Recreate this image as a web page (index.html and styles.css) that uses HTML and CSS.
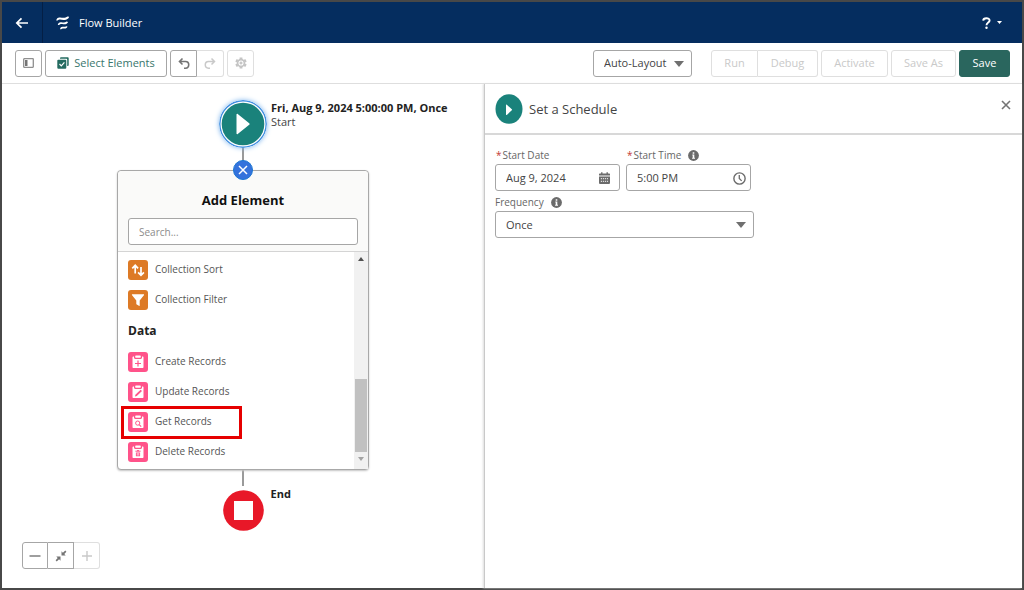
FILE: index.html
```html
<!DOCTYPE html>
<html lang="en">
<head>
<meta charset="utf-8">
<meta name="viewport" content="width=device-width, initial-scale=1">
<title>Flow Builder</title>
<link rel="stylesheet" href="styles.css">
</head>
<body>
<div class="app">
  <header class="topbar">
    <button class="back" type="button" aria-label="Back">
      <svg width="14" height="12" viewBox="0 0 14 12" fill="none" stroke="#fff" stroke-width="1.700"><path d="M13 6H2M6.500 1.300L1.800 6l4.700 4.700"/></svg>
    </button>
    <svg class="logo" width="16" height="16" viewBox="0 0 16 16" fill="#fff"><path d="M1.200 5.600C1.600 3 3 2.300 5 2.500c3 .4 5.500.7 7.500-.9l1.700.2c-.9 2.400-2.900 3.400-5.700 3.100-2.800-.3-4.500-.9-5.900.7z"/><path d="M2.800 10C3.200 7.700 4.400 7 6.300 7.200c2.200.3 3.700.5 5.200-.6l1.600.3c-.8 2-2.400 2.700-4.700 2.400-2-.2-3.200-.7-4.300.7z"/><path d="M5 14.200c.3-2 1.400-2.700 3-2.500 1.200.1 2.200.2 3.200-.5l1.300.3c-.6 1.700-1.700 2.200-3.300 2-1.300-.1-2.100-.4-3 .7z"/></svg>
    <h1 class="app-name">Flow Builder</h1>
    <button class="help" type="button" aria-label="Help">
      <svg width="9" height="12" viewBox="0 0 9 12"><path d="M1.200 3.600C1.300 .6 7.600 .4 7.600 3.500 7.600 5.700 4.500 5.500 4.500 8.300" fill="none" stroke="#fff" stroke-width="1.900"/><circle cx="4.500" cy="10.800" r="1.200" fill="#fff"/></svg>
      <svg width="5" height="3" viewBox="0 0 5 3"><path d="M0 0h5L2.500 3z" fill="#fff"/></svg>
    </button>
  </header>

  <div class="toolbar">
    <button class="btn icon" type="button" aria-label="Toggle toolbox">
      <svg width="11" height="10" viewBox="0 0 11 10"><rect x=".7" y=".7" width="9.600" height="8.600" rx=".5" fill="#fff" stroke="#8f8f8f" stroke-width="1.300"/><path d="M2 2h2.500v6H2z" fill="#747474"/></svg>
    </button>
    <button class="btn select-elements" type="button">
      <svg width="12" height="12" viewBox="0 0 12 12"><path d="M3 1.800V1.200C3 .6 3.400.3 4 .3h6.800c.6 0 .9.300.9.900V8c0 .6-.3 1-.9 1h-.6V2.800c0-.6-.4-1-1-1z" fill="#246b60"/><rect x=".3" y="2.700" width="9" height="9" rx="1" fill="#246b60"/><path d="M2.500 7l1.800 1.900L7.400 5.300" fill="none" stroke="#fff" stroke-width="1.200"/></svg>
      <span>Select Elements</span>
    </button>
    <div class="group">
      <button class="btn icon" type="button" aria-label="Undo">
        <svg width="12" height="12" viewBox="0 0 12 12" fill="none" stroke="#747474" stroke-width="1.600"><path d="M4.500 1.500L1.500 4.500l3 3M1.500 4.500H7.500c4.300 0 4.300 6.700 0 6.700H6"/></svg>
      </button>
      <button class="btn icon" type="button" aria-label="Redo" disabled>
        <svg width="12" height="12" viewBox="0 0 12 12" fill="none" stroke="#c9c9c9" stroke-width="1.500"><path d="M7.500 1.500l3 3-3 3M10.500 4.500H4.500c-4.300 0-4.300 6.700 0 6.700H6"/></svg>
      </button>
    </div>
    <button class="btn icon" type="button" aria-label="Settings" disabled>
      <svg width="12" height="12" viewBox="0 0 12 12" fill="none" stroke="#c4c4c4"><circle cx="6" cy="6" r="3.400" stroke-width="1.700"/><path d="M6 .4v2M6 9.600v2M1 3.200l1.700 1M9.300 7.800l1.700 1M1 8.800l1.700-1M9.300 4.200l1.700-1" stroke-width="2.800"/><circle cx="6" cy="6" r="1.100" fill="#c4c4c4"/></svg>
    </button>
    <div class="actions">
      <div class="picker layout-picker">
        <select class="field" aria-label="Layout mode"><option>Auto-Layout</option></select>
      </div>
      <div class="group">
        <button class="btn run" type="button" disabled>Run</button>
        <button class="btn debug" type="button" disabled>Debug</button>
      </div>
      <button class="btn activate" type="button" disabled>Activate</button>
      <button class="btn save-as" type="button" disabled>Save As</button>
      <button class="btn save" type="button">Save</button>
    </div>
  </div>

  <main class="workspace">
    <section class="canvas" aria-label="Flow canvas">
      <div class="node start">
        <svg width="48" height="48" viewBox="0 0 48 48"><circle cx="24" cy="24" r="23.200" fill="#fff" stroke="#3f8ee0" stroke-width="1.400"/><circle cx="24" cy="24" r="21.300" fill="#1a827b"/><path d="M17.500 14.500c0-.8.600-1.100 1.200-.6l11.500 9.300c.6.500.6 1.100 0 1.600l-11.500 9.300c-.6.500-1.200.2-1.200-.6z" fill="#fff"/></svg>
        <div class="node-label"><strong>Fri, Aug 9, 2024 5:00:00 PM, Once</strong><span>Start</span></div>
      </div>
      <div class="connector from-start"></div>
      <div class="card">
        <button class="close-menu" type="button" aria-label="Close menu"><svg width="10" height="10" viewBox="0 0 10 10" stroke="#fff" stroke-width="1.500"><path d="M1 1l8 8M9 1L1 9"/></svg></button>
        <div class="card-head">
          <h2>Add Element</h2>
          <input class="field search" type="text" placeholder="Search..." aria-label="Search elements">
        </div>
        <div class="card-body">
          <div class="list">
            <button class="row" type="button">
              <svg class="tile orange" width="20" height="20" viewBox="0 0 20 20" fill="none" stroke="#fff" stroke-width="1.700"><path d="M7.200 13.500V5.500M4.300 8.300l2.900-3 2.900 3M13 7v8M10.100 12.300l2.900 3 2.900-3"/></svg>
              <span>Collection Sort</span></button>
            <button class="row" type="button">
              <svg class="tile orange" width="20" height="20" viewBox="0 0 20 20" fill="#fff"><path d="M4.500 4.300h11c.6 0 .8.500.4 1L11.700 10.500v5c0 .5-.4.600-.8.300L8.800 14.600c-.3-.2-.5-.4-.5-.8v-3.300L4.100 5.300c-.4-.5-.2-1 .4-1z"/></svg>
              <span>Collection Filter</span></button>
            <h3>Data</h3>
            <button class="row" type="button">
              <svg class="tile pink" width="20" height="20" viewBox="0 0 20 20"><path d="M6 4.600h-.5c-.6 0-1 .4-1 1V15c0 .6.400 1 1 1h9c.6 0 1-.4 1-1V5.600c0-.6-.4-1-1-1H14v.9c0 .9-.6 1.500-1.500 1.500h-5C6.600 7 6 6.400 6 5.500z" fill="#fff"/><rect x="7.200" y="3.600" width="5.600" height="2.200" rx=".7" fill="#fff"/><path d="M10 8.500v6M7 11.500h6" stroke="#ff538a" stroke-width="1.200"/></svg>
              <span>Create Records</span></button>
            <button class="row" type="button">
              <svg class="tile pink" width="20" height="20" viewBox="0 0 20 20"><path d="M6 4.600h-.5c-.6 0-1 .4-1 1V15c0 .6.400 1 1 1h9c.6 0 1-.4 1-1V5.600c0-.6-.4-1-1-1H14v.9c0 .9-.6 1.500-1.500 1.500h-5C6.600 7 6 6.400 6 5.500z" fill="#fff"/><rect x="7.200" y="3.600" width="5.600" height="2.200" rx=".7" fill="#fff"/><path d="M7 14.600l.4-1.900 5.200-5 1.400 1.400-5.200 5z" fill="#ff538a"/></svg>
              <span>Update Records</span></button>
            <button class="row marked" type="button">
              <svg class="tile pink" width="20" height="20" viewBox="0 0 20 20"><path d="M6 4.600h-.5c-.6 0-1 .4-1 1V15c0 .6.400 1 1 1h9c.6 0 1-.4 1-1V5.600c0-.6-.4-1-1-1H14v.9c0 .9-.6 1.500-1.500 1.500h-5C6.600 7 6 6.400 6 5.500z" fill="#fff"/><rect x="7.200" y="3.600" width="5.600" height="2.200" rx=".7" fill="#fff"/><circle cx="9.700" cy="11.100" r="2.100" fill="none" stroke="#ff538a"/><path d="M11.200 12.600l2 2" stroke="#ff538a" stroke-width="1.200"/></svg>
              <span>Get Records</span></button>
            <button class="row" type="button">
              <svg class="tile pink" width="20" height="20" viewBox="0 0 20 20"><path d="M6 4.600h-.5c-.6 0-1 .4-1 1V15c0 .6.400 1 1 1h9c.6 0 1-.4 1-1V5.600c0-.6-.4-1-1-1H14v.9c0 .9-.6 1.500-1.500 1.500h-5C6.600 7 6 6.400 6 5.500z" fill="#fff"/><rect x="7.200" y="3.600" width="5.600" height="2.200" rx=".7" fill="#fff"/><path d="M7.400 9.200h5.200M9 8.600h2" stroke="#ff538a"/><path d="M7.900 10.400h4.200v3.800H7.900z" fill="#ff538a"/><path d="M9.300 11v2.600M10.700 11v2.600" stroke="#fff" stroke-width=".6"/></svg>
              <span>Delete Records</span></button>
          </div>
          <div class="scrollbar" aria-hidden="true">
            <svg width="6" height="4" viewBox="0 0 6 4"><path d="M0 4h6L3 0z" fill="#505050"/></svg>
            <div class="track"><div class="thumb"></div></div>
            <svg width="6" height="4" viewBox="0 0 6 4"><path d="M0 0h6L3 4z" fill="#a3a3a3"/></svg>
          </div>
        </div>
      </div>
      <div class="connector from-card"></div>
      <div class="node end">
        <svg width="41" height="41" viewBox="0 0 41 41"><circle cx="20.500" cy="20.500" r="20.300" fill="#e81828"/><path d="M11 11h19v19H11z" fill="#fff"/></svg>
        <div class="node-label"><strong>End</strong></div>
      </div>
      <div class="zoom group">
        <button class="btn icon" type="button" aria-label="Zoom out"><svg width="12" height="12" viewBox="0 0 12 12" stroke="#747474" stroke-width="1.400"><path d="M.5 6h11"/></svg></button>
        <button class="btn icon" type="button" aria-label="Zoom to fit"><svg width="12" height="12" viewBox="0 0 12 12" fill="#747474"><path d="M6.500 5.500V1.300l1.400 1.400L10.300.6l1.100 1.100-2.100 2.400 1.400 1.400zM5.500 6.500v4.200L4.100 9.300l-2.400 2.100L.6 10.300l2.100-2.400-1.400-1.400z"/></svg></button>
        <button class="btn icon" type="button" aria-label="Zoom in" disabled><svg width="12" height="12" viewBox="0 0 12 12" stroke="#c9c9c9" stroke-width="1.400"><path d="M1 6h10M6 1v10"/></svg></button>
      </div>
    </section>

    <aside class="panel">
      <div class="panel-head">
        <svg width="28" height="30" viewBox="0 0 28 30"><ellipse cx="14" cy="15" rx="13.500" ry="14.800" fill="#1a827b"/><path d="M11 11c0-.5.400-.7.800-.3l5 4.600c.4.400.4.600 0 1l-5 4.600c-.4.400-.8.200-.8-.3z" fill="#fff"/></svg>
        <h2>Set a Schedule</h2>
        <button class="close-panel" type="button" aria-label="Close panel"><svg width="10" height="10" viewBox="0 0 10 10" stroke="#747474" stroke-width="1.600"><path d="M1 1l8 8M9 1L1 9"/></svg></button>
      </div>
      <form class="form">
        <div class="pair">
          <div class="control">
            <label class="required" for="date">Start Date</label>
            <div class="with-icon date">
              <input class="field" id="date" type="text" value="Aug 9, 2024">
              <svg width="11" height="12" viewBox="0 0 12 12" preserveAspectRatio="none"><path d="M0 3.500V2.300c0-.5.300-.8.800-.8h1.500V.2h1.500v1.300h4.400V.2h1.500v1.300h1.500c.5 0 .8.300.8.800v1.200zM0 4.500h12v6.600c0 .5-.3.800-.8.800H.8c-.5 0-.8-.3-.8-.8z" fill="#6b6b6b"/><path d="M2 6.700h8M2 9.300h8" stroke="#ddd" stroke-width="1.200" stroke-dasharray="1.300 .9"/></svg>
            </div>
          </div>
          <div class="control">
            <div class="label-line"><label class="required" for="time">Start Time</label>
              <svg width="11" height="11" viewBox="0 0 11 11"><circle cx="5.500" cy="5.500" r="5.400" fill="#6b6b6b"/><path d="M4.700 2.200h1.600v1.500H4.700zM4.300 4.600h2v3.200h.7v.9H4.100v-.9h.6V5.500h-.4z" fill="#fff"/></svg></div>
            <div class="with-icon">
              <input class="field" id="time" type="text" value="5:00 PM">
              <svg width="13" height="13" viewBox="0 0 12 12" fill="none" stroke="#6b6b6b" stroke-width="1.300"><circle cx="6" cy="6" r="5.200"/><path d="M5.800 2.800V6l2.200 2.200" stroke-width="1.200"/></svg>
            </div>
          </div>
        </div>
        <div class="control frequency">
          <div class="label-line"><label for="freq">Frequency</label>
            <svg width="11" height="11" viewBox="0 0 11 11"><circle cx="5.500" cy="5.500" r="5.400" fill="#6b6b6b"/><path d="M4.700 2.200h1.600v1.500H4.700zM4.300 4.600h2v3.200h.7v.9H4.100v-.9h.6V5.500h-.4z" fill="#fff"/></svg></div>
          <div class="picker"><select class="field" id="freq"><option>Once</option></select></div>
        </div>
      </form>
    </aside>
  </main>
</div>
</body>
</html>
```
FILE: styles.css
```css
*, *::before, *::after { box-sizing: border-box; }

body {
  margin: 0;
  color: #444;
  font: 11px/14px "Open Sans", "Noto Sans", sans-serif;
}

h1, h2, h3 { margin: 0; }
button, input, select { font: inherit; color: inherit; }
button { padding: 0; border: 0; background: none; }
svg { display: block; flex: none; }

.app {
  display: flex;
  flex-direction: column;
  min-height: 100vh;
  border: 2px solid #484848;
  background: #fff;
}

/* Top bar */
.topbar {
  display: flex;
  align-items: center;
  height: 41px;
  background: #052d5f;
  color: #fff;
}
.back {
  display: flex;
  align-items: center;
  justify-content: center;
  align-self: stretch;
  width: 41px;
  border-right: 1px solid #041f45;
}
.logo { margin-left: 12px; }
.app-name { margin-left: 8px; font-size: 11px; font-weight: 400; }
.help {
  display: flex;
  align-items: center;
  gap: 6px;
  margin-left: auto;
  padding-right: 20px;
}

/* Toolbar */
.toolbar {
  display: flex;
  align-items: center;
  gap: 3px;
  height: 41px;
  padding: 0 12px 0 13px;
  border-bottom: 1px solid #dedede;
}
.btn {
  display: flex;
  align-items: center;
  justify-content: center;
  height: 27px;
  border: 1px solid #a6a6a6;
  border-radius: 3px;
  background: #fff;
}
.btn:disabled { border-color: #dfdfdf; color: #c9c9c9; }
.icon { width: 27px; }
.select-elements { width: 122px; gap: 5px; color: #39766c; }
.group { display: flex; }
.group .btn:first-child { border-radius: 3px 0 0 3px; }
.group .btn + .btn { border-left-width: 0; border-radius: 0; }
.group .btn:last-child { border-radius: 0 3px 3px 0; }
.actions { display: flex; gap: 3px; margin-left: auto; }
.run { width: 47px; }
.debug { width: 60px; }
.activate { width: 67px; }
.save-as { width: 65px; }
.btn.save { width: 51px; border-color: #2a665e; background: #2a665e; color: #fff; }

/* Fields */
.field {
  display: block;
  width: 100%;
  height: 27px;
  padding: 0 10px;
  border: 1px solid #a6a6a6;
  border-radius: 3px;
  background: #fff;
  outline: 0;
}
.field::placeholder { color: #8c8c8c; opacity: 1; }
select.field { appearance: none; }
.search { font-size: 10px; }
.picker { position: relative; }
.picker::after {
  content: "";
  position: absolute;
  top: 11px;
  right: 8px;
  border: solid transparent;
  border-width: 6px 5px 0;
  border-top-color: #6f6f6f;
  pointer-events: none;
}
.layout-picker { width: 99px; margin-right: 16px; }
.with-icon { position: relative; }
.with-icon svg { position: absolute; top: 8px; right: 5px; }
.date svg { right: 10px; }

/* Workspace */
.workspace {
  flex: 1;
  display: grid;
  grid-template-columns: 482fr 538fr;
}
.canvas {
  position: relative;
  display: flex;
  flex-direction: column;
  align-items: center;
  padding-top: 16px;
}
.node { position: relative; }
.start svg { border-radius: 50%; box-shadow: 0 0 5px #7db5ee; }
.node-label {
  position: absolute;
  top: 1px;
  left: 100%;
  display: flex;
  flex-direction: column;
  padding-left: 4px;
  white-space: nowrap;
}
.node-label strong { color: #222; }
.end .node-label { top: -3px; padding-left: 7px; }
.connector { width: 2px; background: #9a9a9a; }
.from-start { height: 22px; }
.from-card { height: 16px; margin-bottom: 4px; }

/* Element menu */
.card {
  position: relative;
  width: 252px;
  border: 1px solid #a8a8a8;
  border-radius: 4px;
  background: #fff;
  box-shadow: 0 1px 2px #c4c4c4;
}
.close-menu {
  position: absolute;
  top: -11px;
  left: calc(50% - 10px);
  display: grid;
  place-items: center;
  width: 20px;
  height: 20px;
  border: 1px solid #1b77d3;
  border-radius: 50%;
  background: #3472dc;
}
.card-head {
  padding: 20px 10px 6px;
  border-bottom: 1px solid #d4d4d4;
  border-radius: 4px 4px 0 0;
  background: #fafaf9;
  text-align: center;
}
.card-head h2 { margin-bottom: 9px; color: #111; font-size: 13px; line-height: 18px; }
.card-body { display: flex; }
.list { flex: 1; padding: 3px 10px 2px; }
.list h3 { color: #222; font-size: 12px; line-height: 32px; }
.row {
  position: relative;
  display: flex;
  align-items: center;
  gap: 7px;
  width: 100%;
  height: 30px;
  color: #555;
  font-size: 10px;
  text-align: left;
}
.row span { padding-bottom: 3px; }
.tile { border-radius: 3px; }
.orange { background: #dd7a26; }
.pink { background: #ff538a; }
.marked::after {
  content: "";
  position: absolute;
  top: -1px;
  left: -7px;
  width: 121px;
  height: 33px;
  border: 3px solid #e60000;
}
.scrollbar {
  display: flex;
  flex-direction: column;
  align-items: center;
  gap: 5px;
  width: 14px;
  padding: 5px 1px 8px;
  background: #f1f1f1;
}
.track { display: flex; flex: 1; align-items: flex-end; width: 100%; }
.thumb { width: 100%; height: 39%; background: #c1c1c1; }

.zoom { position: absolute; left: 20px; bottom: 19px; }
.zoom .icon { width: 26px; }

/* Properties panel */
.panel { border-left: 1px solid #c9c9c9; box-shadow: -1px 0 2px #ddd; }
.panel-head {
  display: flex;
  align-items: center;
  gap: 6px;
  height: 51px;
  padding: 0 11px 0 10px;
  border-bottom: 2px solid #d8d8d8;
}
.panel-head h2 { font-size: 13px; font-weight: 400; line-height: 18px; }
.close-panel { margin: -8px 0 0 auto; }
.form { padding: 13px 10px; }
.pair { display: flex; gap: 6px; }
.control { width: 125px; color: #444; }
.control label { display: block; color: #666; font-size: 10px; line-height: 14px; }
.control .with-icon { margin-top: 2px; }
.required::before { content: "*"; margin: 0 1px; color: #c23934; }
.label-line { display: flex; align-items: center; gap: 7px; }
.frequency { width: 259px; margin-top: 4px; }
.frequency .picker { margin-top: 2px; }
```
